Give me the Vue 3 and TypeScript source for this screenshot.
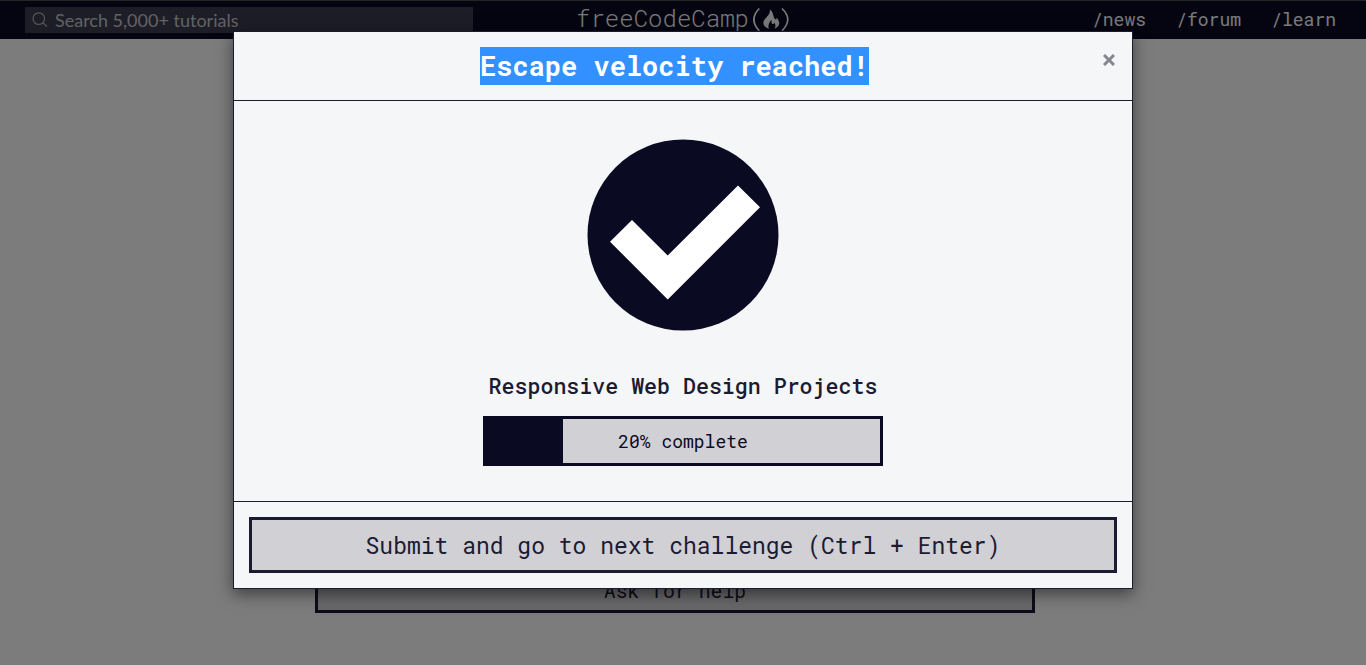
<script setup lang="ts">
const links: string[] = ['/news', '/forum', '/learn']
const percent: number = 20
</script>

<template>
  <div class="page">
    <header class="nav">
      <div class="search">
        <svg class="lens" width="16" height="16" viewBox="0 0 16 16" fill="none" stroke="#a9a9ae" stroke-width="1.2">
          <circle cx="6.8" cy="6.6" r="5.8" />
          <path d="M11 10.8 L15 14.6" />
        </svg>
        <span class="placeholder">Search 5,000+ tutorials</span>
      </div>
      <svg class="logo" width="214" height="38" viewBox="0 0 214 38">
        <g fill="#f5f5f5">
          <text class="brand" x="-1" y="25.6" textLength="173" lengthAdjust="spacing">freeCodeCamp</text>
          <path d="M182.300 7.500 Q171.500 18.500 182.300 29.800" fill="none" stroke="#f5f5f5" stroke-width="1.7" />
          <path d="M205 7.500 Q216.500 18.500 205 29.800" fill="none" stroke="#f5f5f5" stroke-width="1.7" />
          <path d="M192.800 8.500 C196.500 11 196 15 197.500 17.500 C198.800 19 200 18.500 199.300 16.500 C203.500 20.500 203.500 25.500 197.500 27.700 C199 25.500 198.500 23.500 197.300 21.800 C197 23.300 195.500 23.500 194.800 22.500 C194.300 21.500 194.800 20 194.300 19 C192.500 21 190.500 24.500 192 27.700 C186 26 185 21.500 188 18 C190.500 15 193.500 12.500 192.800 8.500 Z" />
        </g>
      </svg>
      <nav class="links">
        <a v-for="link in links" :key="link">{{ link }}</a>
      </nav>
    </header>
    <main class="content">
      <button class="help">Ask for help</button>
    </main>

    <div class="backdrop">
      <section class="modal">
        <div class="modal-header">
          <h1><span>Escape velocity reached!</span></h1>
          <button class="close" aria-label="Close">
            <svg width="12" height="12" viewBox="0 0 12 12" stroke="#858591" stroke-width="3"><path d="M1 1 L11 11 M11 1 L1 11" /></svg>
          </button>
        </div>
        <div class="modal-body">
          <svg class="check" width="192" height="192" viewBox="0 0 192 192">
            <circle cx="96" cy="96" r="95.500" fill="#0a0a23" />
            <path d="M23 102.700 L45 81 L80.700 116.500 L151 46.400 L173 68.300 L80.700 160.500 Z" fill="#fff" />
          </svg>
          <h2>Responsive Web Design Projects</h2>
          <div class="progress">
            <div class="fill" :style="{ width: percent + '%' }"></div>
            <span class="label">{{ percent }}% complete</span>
          </div>
        </div>
        <div class="modal-footer">
          <button class="submit">Submit and go to next challenge (Ctrl + Enter)</button>
        </div>
      </section>
    </div>
  </div>
</template>

<style>
html,
body {
  margin: 0;
  overflow: hidden;
}
</style>

<style scoped>
.page {
  position: relative;
  height: 665px;
  overflow: hidden;
  background: #f9f9f9;
  font-family: "Roboto Mono", "Liberation Mono", monospace;
  color: #1b1b32;
}
* {
  box-sizing: border-box;
}
button {
  font-family: inherit;
  color: inherit;
  margin: 0;
}
.nav {
  display: grid;
  grid-template-columns: 448px 1fr auto;
  height: 39px;
  padding: 0 30px 0 25px;
  background: #0a0a23;
  border-top: 1px solid #4b4b4b;
}
.search {
  display: flex;
  align-items: center;
  height: 26px;
  margin-top: 6px;
  padding-left: 7px;
  background: #3b3b4f;
}
.placeholder {
  margin-left: 7px;
  font: 18px/26px Lato, sans-serif;
  color: #c4c4c8;
  white-space: nowrap;
}
.lens {
  flex: none;
}
.logo {
  margin-left: 104px;
  overflow: visible;
}
.brand {
  font-family: "Roboto Mono", "Liberation Mono", monospace;
  font-size: 24px;
  font-weight: 360;
}
.links {
  display: flex;
  gap: 30.200px;
  font-size: 18px;
  line-height: 37px;
  color: #f5f5f5;
}
.content {
  padding-top: 532px;
}
.help {
  display: block;
  width: 720px;
  height: 42px;
  margin-left: 315px;
  padding: 0 0 4px;
  border: 3px solid #1b1b32;
  border-radius: 0;
  background: #d0d0d5;
  font-size: 19.800px;
  font-weight: 370;
  line-height: 32px;
}
.backdrop {
  position: absolute;
  inset: 0;
  padding-top: 31px;
  background: rgba(0, 0, 0, 0.5);
}
.modal {
  width: 900px;
  height: 558px;
  margin: 0 auto;
  border: 1px solid #1b1b32;
  background: #f5f6f7;
  box-shadow: 0 5px 15px rgba(0, 0, 0, 0.5);
}
.modal-header {
  display: grid;
  grid-template-columns: 1fr 32px;
  height: 69px;
  padding-left: 15px;
  border-bottom: 1px solid #1b1b32;
}
h1 {
  margin: 15px 0 0;
  font-size: 27px;
  line-height: 38px;
  text-align: center;
  color: #fff;
}
h1 span {
  display: inline-block;
  height: 38px;
  background: #3390ff;
}
.close {
  display: flex;
  width: 12px;
  height: 12px;
  margin: 22px 0 0 3px;
  padding: 0;
  border: 0;
  background: none;
}
.modal-body {
  display: flex;
  flex-direction: column;
  align-items: center;
  height: 400px;
  padding-top: 38px;
}
.check {
  flex: none;
}
h2 {
  margin: 40px 0 0;
  font-size: 21.600px;
  line-height: 30px;
  font-weight: 500;
  white-space: nowrap;
}
.progress {
  display: grid;
  width: 400px;
  height: 50px;
  margin-top: 15px;
  border: 3px solid #0a0a23;
  background: #d0d0d5;
}
.fill,
.label {
  grid-area: 1 / 1;
}
.fill {
  margin-left: -2px;
  background: #0a0a23;
}
.label {
  font-size: 18px;
  font-weight: 370;
  line-height: 44px;
  text-align: center;
  color: #0a0a23;
}
.modal-footer {
  height: 87px;
  padding: 15px;
  border-top: 1px solid #1b1b32;
}
.submit {
  display: block;
  width: 100%;
  height: 56px;
  padding: 0;
  border: 3px solid #1b1b32;
  border-radius: 0;
  background: #d0d0d5;
  font-size: 23px;
  font-weight: 370;
  line-height: 50px;
}
</style>
